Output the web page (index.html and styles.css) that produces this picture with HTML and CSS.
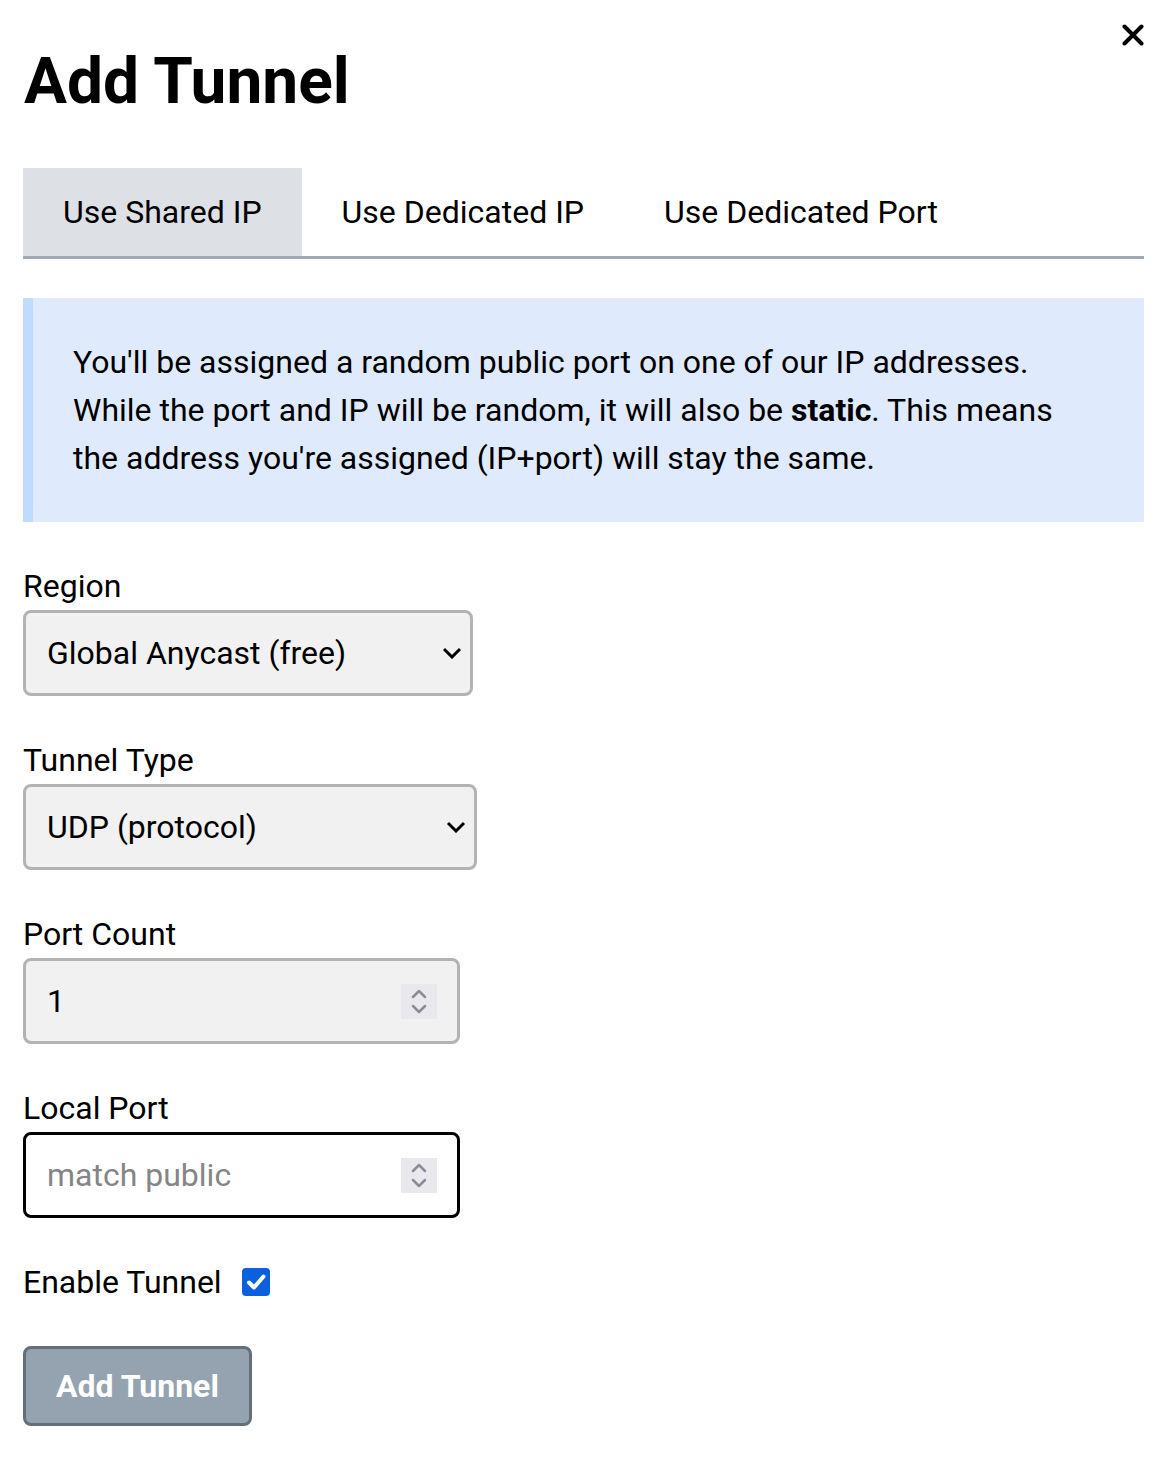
FILE: index.html
```html
<!DOCTYPE html>
<html lang="en">
<head>
<meta charset="utf-8">
<title>Add Tunnel</title>
<link rel="stylesheet" href="styles.css">
</head>
<body>
<div class="modal">
  <button class="close" aria-label="Close">
    <svg width="22" height="22" viewBox="0 0 22 22"><path d="M2.5 2.5 L19.5 19.5 M19.5 2.5 L2.5 19.5" stroke="#000" stroke-width="4" stroke-linecap="round" fill="none"/></svg>
  </button>
  <h1 class="title">Add Tunnel</h1>

  <div class="tabs">
    <div class="tab active">Use Shared IP</div>
    <div class="tab">Use Dedicated IP</div>
    <div class="tab">Use Dedicated Port</div>
  </div>

  <div class="info">
    You'll be assigned a random public port on one of our IP addresses. While the port and IP will be random, it will also be <strong>static</strong>. This means the address you're assigned (IP+port) will stay the same.
  </div>

  <div class="field">
    <label class="label">Region</label>
    <div class="select-wrap w-region">
      <select class="select"><option>Global Anycast (free)</option></select>
      <svg class="chev" width="20" height="12" viewBox="0 0 20 12"><path d="M2 2 L10 10 L18 2" stroke="#000" stroke-width="3" fill="none"/></svg>
    </div>
  </div>

  <div class="field">
    <label class="label">Tunnel Type</label>
    <div class="select-wrap w-type">
      <select class="select"><option>UDP (protocol)</option></select>
      <svg class="chev" width="20" height="12" viewBox="0 0 20 12"><path d="M2 2 L10 10 L18 2" stroke="#000" stroke-width="3" fill="none"/></svg>
    </div>
  </div>

  <div class="field">
    <label class="label">Port Count</label>
    <div class="numbox">
      <input class="num" type="text" value="1">
      <span class="spin">
        <svg width="36" height="35" viewBox="0 0 36 35"><path d="M12 13 L18 7 L24 13 M12 22 L18 28 L24 22" stroke="#8b8b99" stroke-width="2.5" fill="none" stroke-linecap="round" stroke-linejoin="round"/></svg>
      </span>
    </div>
  </div>

  <div class="field">
    <label class="label">Local Port</label>
    <div class="numbox focus">
      <input class="num" type="text" placeholder="match public">
      <span class="spin">
        <svg width="36" height="35" viewBox="0 0 36 35"><path d="M12 13 L18 7 L24 13 M12 22 L18 28 L24 22" stroke="#8b8b99" stroke-width="2.5" fill="none" stroke-linecap="round" stroke-linejoin="round"/></svg>
      </span>
    </div>
  </div>

  <div class="field enable">
    <span class="label-inline">Enable Tunnel</span>
    <span class="checkbox" role="checkbox" aria-checked="true">
      <svg width="28" height="28" viewBox="0 0 28 28"><path d="M7 14.5 L12 19.5 L21.5 8.5" stroke="#fff" stroke-width="4" fill="none" stroke-linecap="round" stroke-linejoin="round"/></svg>
    </span>
  </div>

  <div class="actions">
    <button class="submit">Add Tunnel</button>
  </div>
</div>
</body>
</html>
```

FILE: styles.css
```css
* { box-sizing: border-box; }

html, body {
  margin: 0;
  padding: 0;
  background: #fff;
}

body {
  font-family: Roboto, "Liberation Sans", Arial, sans-serif;
  font-size: 32px;
  color: #000;
}

.modal {
  position: relative;
  padding: 1px 26px 30px 23px;
}

.close {
  position: absolute;
  top: 24px;
  right: 26px;
  width: 22px;
  height: 22px;
  padding: 0;
  border: none;
  background: transparent;
  display: flex;
}

.title {
  font-size: 64px;
  font-weight: 700;
  line-height: 75px;
  margin: 43px 0 49px 1px;
}

.tabs {
  display: flex;
  border-bottom: 3px solid #a1aab5;
}

.tab {
  padding: 20px 40px;
  line-height: 48px;
  white-space: nowrap;
}

.tab.active {
  background: #dde1e6;
}

.info {
  margin-top: 39px;
  background: #dfebfd;
  border-left: 10px solid #bfdbfe;
  padding: 40px 40px;
  line-height: 48px;
}

.info strong {
  font-weight: 700;
}

.field {
  margin-top: 40px;
}

.label {
  display: block;
  line-height: 48px;
}

.select-wrap {
  position: relative;
  height: 86px;
}

.w-region { width: 450px; }
.w-type { width: 454px; }

.select {
  appearance: none;
  -webkit-appearance: none;
  width: 100%;
  height: 100%;
  border: 3px solid #b3b3b3;
  border-radius: 8px;
  background: #f1f1f1;
  font-family: inherit;
  font-size: 32px;
  color: #000;
  padding: 0 40px 0 21px;
  margin: 0;
}

.chev {
  position: absolute;
  right: 11px;
  top: 37px;
  pointer-events: none;
}

.numbox {
  width: 437px;
  height: 86px;
  display: flex;
  align-items: center;
  border: 3px solid #b3b3b3;
  border-radius: 8px;
  background: #f1f1f1;
  padding: 0 20px 0 21px;
}

.numbox.focus {
  border-color: #000;
  background: #fff;
}

.num {
  flex: 1;
  min-width: 0;
  border: none;
  outline: none;
  background: transparent;
  font-family: inherit;
  font-size: 32px;
  color: #000;
  padding: 0;
  margin: 0;
}

.num::placeholder {
  color: #858585;
}

.spin {
  width: 36px;
  height: 35px;
  background: #e9e9ed;
  display: flex;
}

.enable {
  display: flex;
  align-items: center;
  gap: 20px;
  line-height: 48px;
}

.checkbox {
  width: 28px;
  height: 28px;
  border-radius: 4px;
  background: #0b60dd;
  display: flex;
}

.actions {
  margin-top: 40px;
}

.submit {
  font-family: inherit;
  font-size: 32px;
  font-weight: 700;
  line-height: 48px;
  color: #fff;
  background: #94a3af;
  border: 3px solid #63707b;
  border-radius: 8px;
  padding: 13px 30px 13px;
  margin: 0;
}
```
